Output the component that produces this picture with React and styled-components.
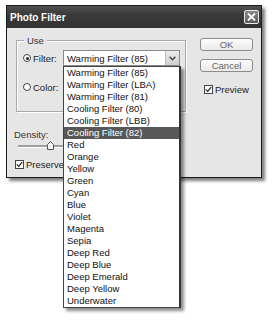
import React from 'react'
import styled, { createGlobalStyle } from 'styled-components'

const Global = createGlobalStyle`
  html, body { margin: 0; padding: 0; background: #fff; }
  body { font-family: "Liberation Sans", Arial, sans-serif; font-size: 9.5px; color: #111; }
`

const Page = styled.div`
  min-height: 320px;
  box-sizing: border-box;
  padding: 5px 0 0 6px;
`

const Window = styled.div`
  width: 256px;
  height: 173px;
  box-sizing: border-box;
  border: 1px solid #1c1c1c;
  background: #e6e6e6;
  box-shadow: 3px 3px 3px rgba(0, 0, 0, 0.5);
  display: flex;
  flex-direction: column;
`

const TitleBar = styled.div`
  height: 22px;
  flex: none;
  display: flex;
  align-items: center;
  justify-content: space-between;
  padding: 0 2px 0 2px;
  background: linear-gradient(#505050, #3a3a3a 40%, #333);
`

const Title = styled.div`
  color: #fff;
  font-weight: bold;
  font-size: 10px;
  padding-left: 1px;
`

const CloseBtn = styled.div`
  width: 15px;
  height: 14px;
  box-sizing: border-box;
  border: 1px solid #e8e8e8;
  border-radius: 2px;
  background: linear-gradient(#8a8a8a, #5c5c5c);
  display: flex;
  align-items: center;
  justify-content: center;
`

const Body = styled.div`
  flex: 1;
  display: flex;
  padding: 10px 8px 0 9px;
`

const LeftCol = styled.div`
  width: 170px;
  padding-top: 2px;
  display: flex;
  flex-direction: column;
`

const RightCol = styled.div`
  margin-left: auto;
  width: 53px;
  display: flex;
  flex-direction: column;
`

const Group = styled.div`
  position: relative;
  padding: 9px 4px 16px 6px;
  border: 1px solid #a9a9a9;
  box-shadow: 1px 1px 0 #fff, inset 1px 1px 0 #fff;
  display: flex;
  flex-direction: column;
  gap: 13px;
`

const Legend = styled.span`
  position: absolute;
  top: -6px;
  left: 7px;
  padding: 0 3px;
  background: #e6e6e6;
  color: #333;
  line-height: 11px;
`

const OptRow = styled.div`
  display: flex;
  align-items: center;
  height: 16px;
`

const Radio = styled.span`
  width: 8px;
  height: 8px;
  box-sizing: border-box;
  border-radius: 50%;
  border: 1px solid #444;
  background: #fff;
  display: flex;
  align-items: center;
  justify-content: center;
  flex: none;
  &::after {
    content: "";
    width: 3px;
    height: 3px;
    border-radius: 50%;
    background: ${p => (p.$on ? '#222' : 'transparent')};
  }
`

const OptLabel = styled.span`
  width: 30px;
  margin-left: 2px;
  color: #222;
`

const SelectWrap = styled.div`
  position: relative;
  width: 117px;
  height: 16px;
`

const Select = styled.div`
  height: 16px;
  box-sizing: border-box;
  border: 1px solid #8a8a8a;
  background: #fff;
  display: flex;
  align-items: center;
  padding-left: 3px;
`

const SelectText = styled.span`
  flex: 1;
`

const ArrowBtn = styled.span`
  width: 13px;
  height: 14px;
  background: linear-gradient(#ececec, #cfcfcf);
  border-left: 1px solid #bdbdbd;
  display: flex;
  align-items: center;
  justify-content: center;
`

const Swatch = styled.div`
  width: 30px;
  height: 16px;
  border: 1px solid #888;
  background: #d9a35a;
`

const List = styled.ul`
  position: absolute;
  top: 16px;
  left: 0;
  width: 118px;
  margin: 0;
  padding: 0;
  list-style: none;
  box-sizing: border-box;
  background: #fff;
  border: 1px solid #444;
  border-right: 2px solid #333;
  box-shadow: 3px 3px 3px rgba(0, 0, 0, 0.45);
  z-index: 5;
`

const Item = styled.li`
  height: 12px;
  line-height: 12px;
  padding-left: 3px;
  white-space: nowrap;
  color: ${p => (p.$sel ? '#fff' : '#111')};
  background: ${p => (p.$sel ? '#585858' : 'transparent')};
`

const Density = styled.div`
  margin-top: 17px;
  margin-left: -2px;
  color: #333;
  line-height: 12px;
`

const SliderRow = styled.div`
  position: relative;
  margin-left: 2px;
  width: 120px;
  height: 10px;
  display: flex;
  align-items: center;
`

const Track = styled.div`
  width: 100%;
  height: 2px;
  background: #a0a0a0;
  border-bottom: 1px solid #fff;
`

const Thumb = styled.svg`
  position: absolute;
  left: 29px;
  top: 0;
`

const CheckRow = styled.div`
  display: flex;
  align-items: center;
  gap: 2px;
  line-height: 11px;
  margin-top: ${p => p.$mt}px;
  margin-left: ${p => p.$ml}px;
  color: #222;
`

const Box = styled.span`
  width: 9px;
  height: 9px;
  box-sizing: border-box;
  border: 1px solid #444;
  background: #fff;
  display: flex;
  align-items: center;
  justify-content: center;
`

const Button = styled.div`
  height: 13px;
  box-sizing: border-box;
  border: 1px solid #8c8c8c;
  border-radius: 3px;
  background: linear-gradient(#fdfdfd, #e9e9e9);
  color: #666;
  display: flex;
  align-items: center;
  justify-content: center;
  margin-bottom: 8px;
`

const items = [
  'Warming Filter (85)', 'Warming Filter (LBA)', 'Warming Filter (81)',
  'Cooling Filter (80)', 'Cooling Filter (LBB)', 'Cooling Filter (82)',
  'Red', 'Orange', 'Yellow', 'Green', 'Cyan', 'Blue', 'Violet', 'Magenta',
  'Sepia', 'Deep Red', 'Deep Blue', 'Deep Emerald', 'Deep Yellow', 'Underwater',
]

const Check = () => (
  <svg width="7" height="7" viewBox="0 0 7 7">
    <path d="M0.8 3.4 L2.7 5.4 L6.2 1.2" fill="none" stroke="#222" strokeWidth="1.2" />
  </svg>
)

export default function App() {
  return (
    <Page>
      <Global />
      <Window>
        <TitleBar>
          <Title>Photo Filter</Title>
          <CloseBtn>
            <svg width="9" height="8" viewBox="0 0 9 8">
              <path d="M1 0.5 L8 7.5 M8 0.5 L1 7.5" stroke="#fff" strokeWidth="1.8" />
            </svg>
          </CloseBtn>
        </TitleBar>
        <Body>
          <LeftCol>
            <Group>
              <Legend>Use</Legend>
              <OptRow>
                <Radio $on />
                <OptLabel>Filter:</OptLabel>
                <SelectWrap>
                  <Select>
                    <SelectText>Warming Filter (85)</SelectText>
                    <ArrowBtn>
                      <svg width="7" height="5" viewBox="0 0 7 5">
                        <path d="M0.6 0.8 L3.5 3.8 L6.4 0.8" fill="none" stroke="#444" strokeWidth="1.3" />
                      </svg>
                    </ArrowBtn>
                  </Select>
                  <List>
                    {items.map((t, i) => (
                      <Item key={t} $sel={i === 5}>{t}</Item>
                    ))}
                  </List>
                </SelectWrap>
              </OptRow>
              <OptRow>
                <Radio />
                <OptLabel>Color:</OptLabel>
                <Swatch />
              </OptRow>
            </Group>
            <Density>Density:</Density>
            <SliderRow>
              <Track />
              <Thumb width="7" height="9" viewBox="0 0 7 9">
                <path d="M0.5 8.5 V3.5 L3.5 0.5 L6.5 3.5 V8.5 Z" fill="#f4f4f4" stroke="#555" />
              </Thumb>
            </SliderRow>
            <CheckRow $mt={8} $ml={-1}>
              <Box><Check /></Box>
              <span>Preserve Luminosity</span>
            </CheckRow>
          </LeftCol>
          <RightCol>
            <Button>OK</Button>
            <Button>Cancel</Button>
            <CheckRow $mt={4} $ml={4}>
              <Box><Check /></Box>
              <span>Preview</span>
            </CheckRow>
          </RightCol>
        </Body>
      </Window>
    </Page>
  )
}
